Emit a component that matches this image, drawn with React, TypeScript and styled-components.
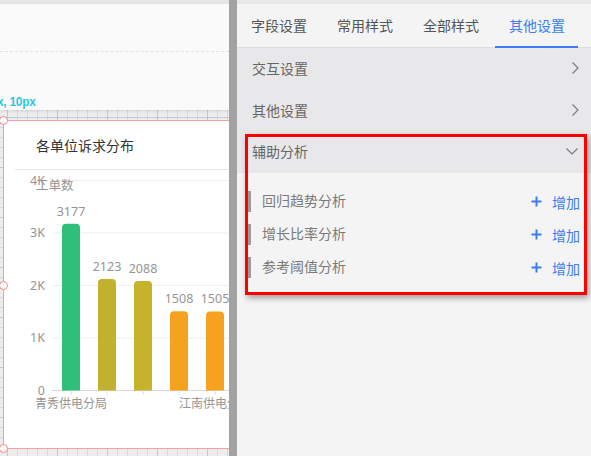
import React from "react";
import styled, { createGlobalStyle } from "styled-components";

const Global = createGlobalStyle`
  html, body { margin: 0; padding: 0; }
  body {
    width: 591px; height: 456px; overflow: hidden;
    font-family: "Noto Sans", "Noto Sans CJK SC", sans-serif;
    background: #f4f4f4;
  }
  #root { height: 456px; }
`;

const Page = styled.div`
  display: flex;
  width: 591px;
  height: 456px;
  overflow: hidden;
`;

const LeftArea = styled.div`
  width: 229px;
  display: flex;
  flex-direction: column;
  overflow: hidden;
`;

const TopStrip = styled.div<{ $bg: string }>`
  height: 4px;
  flex: none;
  background: ${(p) => p.$bg};
`;

const Toolbar = styled.div`
  height: 106px;
  flex: none;
  background: #fafafa;
  display: flex;
  flex-direction: column;
  box-shadow: 0 1px 3px rgba(0, 0, 0, 0.12);
  position: relative;
  z-index: 1;
`;

const DashedRow = styled.div`
  height: 47px;
  border-bottom: 1px dashed #e2e2e2;
  flex: none;
`;

const Offset = styled.div`
  margin-top: auto;
  margin-left: -3px;
  padding-bottom: 1px;
  color: #2cc6e4;
  font-family: "Liberation Sans", sans-serif;
  font-weight: bold;
  font-size: 12px;
  line-height: 14px;
  letter-spacing: -0.3px;
`;

const Canvas = styled.div`
  flex: 1;
  background-color: #ededed;
  background-image:
    linear-gradient(to right, rgba(160, 185, 230, 0.5) 1px, transparent 1px),
    linear-gradient(to bottom, rgba(160, 185, 230, 0.5) 1px, transparent 1px),
    linear-gradient(to right, rgba(210, 214, 222, 0.85) 1px, transparent 1px),
    linear-gradient(to bottom, rgba(210, 214, 222, 0.85) 1px, transparent 1px);
  background-size: 50px 50px, 50px 50px, 10px 10px, 10px 10px;
  background-position: 7px 0, 0 7px, 7px 0, 0 7px;
  padding: 10px 0 0 3px;
  overflow: hidden;
`;

const Card = styled.div`
  position: relative;
  width: 260px;
  height: 329px;
  box-sizing: border-box;
  background: #fff;
  border: 1px solid #f4a0a0;
`;

const Handle = styled.div<{ $top: number }>`
  position: absolute;
  left: -5px;
  top: ${(p) => p.$top}px;
  width: 7px;
  height: 7px;
  border-radius: 50%;
  border: 1px solid #f08a8a;
  background: #fff;
`;

const CardHeader = styled.div`
  height: 48px;
  margin-left: 11px;
  padding-left: 21px;
  border-bottom: 1px solid #e6e6e6;
  display: flex;
  align-items: center;
  font-family: "Noto Sans CJK SC", sans-serif;
  font-size: 14px;
  color: #333;
`;

const ChartSvg = styled.svg`
  display: block;
`;

const Divider = styled.div`
  width: 8px;
  flex: none;
  background: #a2a2a2;
`;

const RightPanel = styled.div`
  flex: 1;
  position: relative;
  display: flex;
  flex-direction: column;
  background: #f4f4f4;
  font-family: "Noto Sans CJK SC", sans-serif;
`;

const Tabs = styled.div`
  flex: none;
  display: flex;
  border-bottom: 1px solid #dedede;
  box-sizing: border-box;
  height: 44px;
`;

const Tab = styled.div<{ $active?: boolean }>`
  position: relative;
  width: 86px;
  box-sizing: border-box;
  padding-left: 14px;
  padding-bottom: 2px;
  display: flex;
  align-items: center;
  font-size: 14px;
  color: ${(p) => (p.$active ? "#3b7cf2" : "#555")};
  &::after {
    content: "";
    display: ${(p) => (p.$active ? "block" : "none")};
    position: absolute;
    left: 0;
    right: 3px;
    bottom: -1px;
    height: 2px;
    background: #3b7cf2;
  }
`;

const Row = styled.div<{ $h: number }>`
  height: ${(p) => p.$h}px;
  flex: none;
  display: flex;
  align-items: center;
  justify-content: space-between;
  padding: 0 12px 2px 15px;
  box-sizing: border-box;
  background: #e8e8ea;
  font-size: 14px;
  color: #666;
`;

const Content = styled.div`
  padding: 12px 11px 6px 11px;
  display: flex;
  flex-direction: column;
`;

const Item = styled.div`
  height: 33px;
  display: flex;
  align-items: center;
`;

const Bar = styled.div`
  width: 3px;
  height: 21px;
  background: #9a9a9a;
  margin-right: 11px;
`;

const ItemText = styled.div`
  flex: 1;
  font-size: 14px;
  color: #7a7a7a;
  margin-top: -4px;
`;

const AddBtn = styled.div`
  display: flex;
  align-items: center;
  gap: 10px;
  color: #3b7cf2;
  font-size: 14px;
`;

const Highlight = styled.div`
  position: absolute;
  left: 8px;
  top: 134px;
  width: 342px;
  height: 161px;
  box-sizing: border-box;
  border: 3px solid #ff0000;
  box-shadow: 2px 3px 6px rgba(0, 0, 0, 0.35);
  pointer-events: none;
`;

const ChevronRight = () => (
  <svg width="8" height="14" viewBox="0 0 8 14">
    <polyline points="1.5,1.5 7,7 1.5,12.5" fill="none" stroke="#777" strokeWidth="1.1" />
  </svg>
);

const ChevronDown = () => (
  <svg width="14" height="8" viewBox="0 0 14 8">
    <polyline points="1.5,1.5 7,7 12.5,1.5" fill="none" stroke="#777" strokeWidth="1.1" />
  </svg>
);

const Plus = () => (
  <svg width="11" height="11" viewBox="0 0 11 11">
    <path d="M5.5 0.5V10.5M0.5 5.5H10.5" stroke="#3b7cf2" strokeWidth="2" />
  </svg>
);

const bars = [
  { x: 62, v: 3177, c: "#2ebf78" },
  { x: 98, v: 2123, c: "#c1b12f" },
  { x: 134, v: 2088, c: "#c6b22b" },
  { x: 170, v: 1508, c: "#f6a21f" },
  { x: 206, v: 1505, c: "#f6a21f" },
];

const base = 389.5;
const perK = 52.5;
const label = "#959595";

const Chart = () => (
  <ChartSvg width="256" height="279" viewBox="4 169 256 279">
    {[0, 1, 2, 3, 4].map((k) => (
      <line key={k} x1="52" x2="260" y1={base - k * perK} y2={base - k * perK} stroke={k === 0 ? "#d8d8d8" : "#eeeeee"} strokeWidth="1" />
    ))}
    {["0", "1K", "2K", "3K", "4K"].map((t, k) => (
      <text key={t} x="45" y={base - k * perK + 4} textAnchor="end" fontSize="12.5" fill={label} fontFamily="Noto Sans, sans-serif">
        {t}
      </text>
    ))}
    <text x="36" y="189" fontSize="12.5" fill={label} fontFamily="Noto Sans CJK SC, sans-serif">工单数</text>
    {bars.map((b) => {
      const top = base - (b.v / 1000) * perK;
      return (
        <g key={b.x}>
          <path d={`M${b.x} ${base} V${top + 4} Q${b.x} ${top} ${b.x + 4} ${top} H${b.x + 14} Q${b.x + 18} ${top} ${b.x + 18} ${top + 4} V${base} Z`} fill={b.c} />
          <text x={b.x + 9} y={top - 8} textAnchor="middle" fontSize="12.5" fill={label} fontFamily="Noto Sans, sans-serif">
            {b.v}
          </text>
          <line x1={b.x + 9} x2={b.x + 9} y1={base} y2={base + 4} stroke="#d8d8d8" />
        </g>
      );
    })}
    <text x="71" y="407" textAnchor="middle" fontSize="12" fill={label} fontFamily="Noto Sans CJK SC, sans-serif">青秀供电分局</text>
    <text x="215" y="407" textAnchor="middle" fontSize="12" fill={label} fontFamily="Noto Sans CJK SC, sans-serif">江南供电分局</text>
  </ChartSvg>
);

const items = ["回归趋势分析", "增长比率分析", "参考阈值分析"];

export default function App() {
  return (
    <Page>
      <Global />
      <LeftArea>
        <TopStrip $bg="#e6e6e6" />
        <Toolbar>
          <DashedRow />
          <Offset>x, 10px</Offset>
        </Toolbar>
        <Canvas>
          <Card>
            <Handle $top={-5} />
            <Handle $top={160} />
            <Handle $top={323} />
            <CardHeader>各单位诉求分布</CardHeader>
            <Chart />
          </Card>
        </Canvas>
      </LeftArea>
      <Divider />
      <RightPanel>
        <TopStrip $bg="#e8e8e8" />
        <Tabs>
          <Tab>字段设置</Tab>
          <Tab>常用样式</Tab>
          <Tab>全部样式</Tab>
          <Tab $active>其他设置</Tab>
        </Tabs>
        <Row $h={42}>
          交互设置
          <ChevronRight />
        </Row>
        <Row $h={41}>
          其他设置
          <ChevronRight />
        </Row>
        <Row $h={42}>
          辅助分析
          <ChevronDown />
        </Row>
        <Content>
          {items.map((t) => (
            <Item key={t}>
              <Bar />
              <ItemText>{t}</ItemText>
              <AddBtn>
                <Plus />
                增加
              </AddBtn>
            </Item>
          ))}
        </Content>
        <Highlight />
      </RightPanel>
    </Page>
  );
}
